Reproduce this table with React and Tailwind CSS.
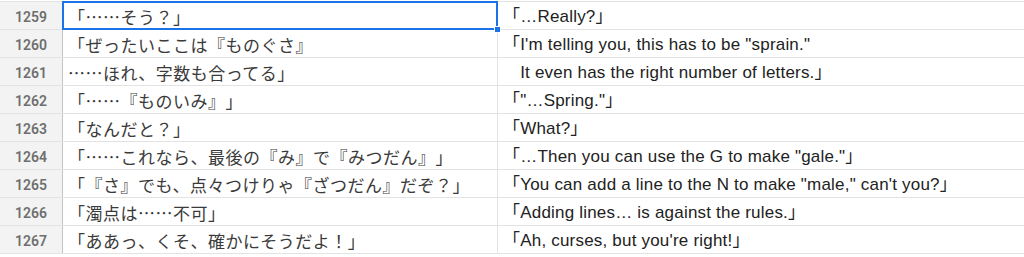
import React from 'react';

const rows = [
    { n: 1259, ja: '「……そう？」', en: '「…Really?」' },
    { n: 1260, ja: '「ぜったいここは『ものぐさ』', en: '「I\'m telling you, this has to be "sprain."' },
    { n: 1261, ja: '……ほれ、字数も合ってる」', en: '　It even has the right number of letters.」' },
    { n: 1262, ja: '「……『ものいみ』」', en: '「"…Spring."」' },
    { n: 1263, ja: '「なんだと？」', en: '「What?」' },
    { n: 1264, ja: '「……これなら、最後の『み』で『みつだん』」', en: '「…Then you can use the G to make "gale."」' },
    { n: 1265, ja: '「『さ』でも、点々つけりゃ『ざつだん』だぞ？」', en: '「You can add a line to the N to make "male," can\'t you?」' },
    { n: 1266, ja: '「濁点は……不可」', en: '「Adding lines… is against the rules.」' },
    { n: 1267, ja: '「ああっ、くそ、確かにそうだよ！」', en: '「Ah, curses, but you\'re right!」' },
];

export default function App() {
    return (
        <div className="h-[257px] w-[1024px] overflow-hidden bg-white">
            <div className="h-px" />
            <div className="border-t border-[#e3e3e3]">
                {rows.map((r, i) => (
                    <div key={r.n} className="flex h-[28px] border-b border-[#e3e3e3]">
                        {/* row number */}
                        <div className="flex w-[63px] shrink-0 items-center justify-center border-r border-[#c4c4c4] bg-[#f3f3f3] pt-[3px] font-['Roboto',sans-serif] text-[14px] font-semibold text-[#6e6e6e]">
                            {r.n}
                        </div>
                        {/* japanese */}
                        <div className="relative flex w-[435px] shrink-0 items-center border-r border-[#e3e3e3] pl-[5px] pt-[3px] font-['Noto_Sans_CJK_JP',sans-serif] text-[17px] tracking-[0.5px] whitespace-nowrap text-[#3a3a3a] [text-spacing-trim:space-all]">
                            {r.ja}
                            {i === 0 && (
                                <>
                                    <div className="absolute -top-px -right-px -bottom-px -left-px border-2 border-[#1a73e8]" />
                                    <div className="absolute -right-[4px] -bottom-[4px] z-10 h-[7px] w-[7px] border border-white bg-[#1a73e8]" />
                                </>
                            )}
                        </div>
                        {/* english */}
                        <div className="flex flex-1 items-center pl-[5px] pt-[3px] font-['Liberation_Sans','Noto_Sans_CJK_JP',sans-serif] text-[17px] tracking-[0.2px] whitespace-nowrap text-[#222] [text-spacing-trim:space-all]">
                            {r.en}
                        </div>
                    </div>
                ))}
            </div>
        </div>
    );
}
